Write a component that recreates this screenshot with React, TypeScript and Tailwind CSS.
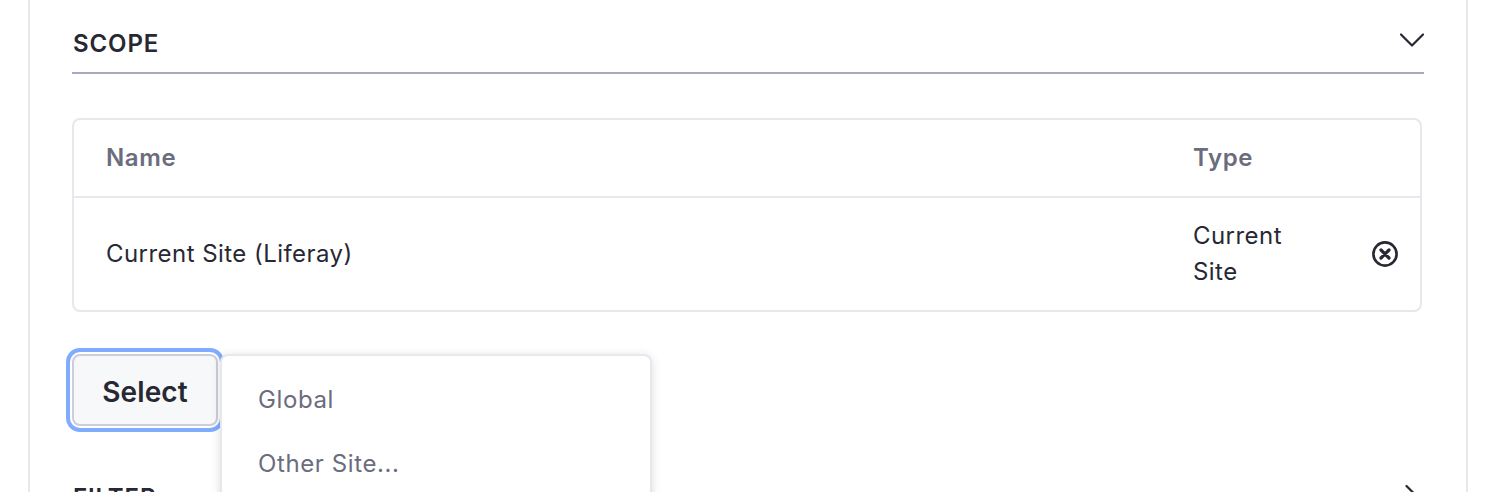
import { ChevronDown, ChevronRight } from "lucide-react";

function RemoveIcon() {
  return (
    <svg viewBox="0 0 26 26" className="h-[26px] w-[26px] text-[#272833]" fill="none" stroke="currentColor">
      <circle cx="13" cy="13" r="11.6" strokeWidth="2.6" />
      <path d="M9 9l8 8M17 9l-8 8" strokeWidth="3.2" strokeLinecap="round" />
    </svg>
  );
}

export default function App() {
  return (
    <div className="h-[492px] overflow-hidden bg-white pl-[28px] pr-[20px] font-['Inter',sans-serif] text-[#272833]">
      <div className="h-full border-x-2 border-[#e7e7ed] px-[42px]">
        <div className="flex h-[74px] items-start justify-between border-b-2 border-[#a7a9bc] pl-[1px]">
          <span className="mt-[26px] text-[24px] font-semibold leading-[36px] tracking-[0.9px]">SCOPE</span>
          <ChevronDown className="mr-[-10px] mt-[18px] h-[44px] w-[44px]" strokeWidth={1.2} />
        </div>

        <div className="mr-[2px] mt-[44px] rounded-[8px] border-2 border-[#e7e7ed]">
          <div className="flex h-[78px] items-center border-b-2 border-[#e7e7ed] text-[24px] font-semibold tracking-[0.6px] text-[#6b6c7e]">
            <span className="flex-1 pl-[32px]">Name</span>
            <span className="w-[227px]">Type</span>
          </div>
          <div className="flex h-[112px] items-center text-[24px] leading-[36px] tracking-[0.45px]">
            <span className="flex-1 pl-[32px]">Current Site (Liferay)</span>
            <span className="w-[179px]">Current<br />Site</span>
            <span className="flex w-[48px] justify-start">
              <RemoveIcon />
            </span>
          </div>
        </div>

        <div className="relative mt-[42px]">
          <button className="h-[72px] w-[146px] rounded-[8px] border-2 border-[#cdced9] bg-[#f7f8f9] pt-[3px] text-[28px] font-semibold tracking-[0.1px] shadow-[0_0_0_2px_#fff,0_0_0_6px_#80acff]">
            Select
          </button>
          <div className="absolute left-[148px] top-0 z-10 h-[200px] w-[432px] rounded-[8px] border-2 border-[#e7e7ed] bg-white py-[12px] text-[24px] tracking-[0.6px] text-[#6b6c7e] shadow-[0_2px_10px_rgba(39,40,51,0.16)]">
            <div className="flex h-[64px] items-center pl-[36px]">Global</div>
            <div className="flex h-[64px] items-center pl-[36px]">Other Site...</div>
          </div>
          <div className="mt-[54px] flex items-start justify-between pl-[1px]">
            <span className="text-[24px] font-semibold leading-[36px] tracking-[0.9px]">FILTER</span>
            <ChevronRight className="mr-[-10px] mt-[-5px] h-[44px] w-[44px]" strokeWidth={1.2} />
          </div>
        </div>
      </div>
    </div>
  );
}
